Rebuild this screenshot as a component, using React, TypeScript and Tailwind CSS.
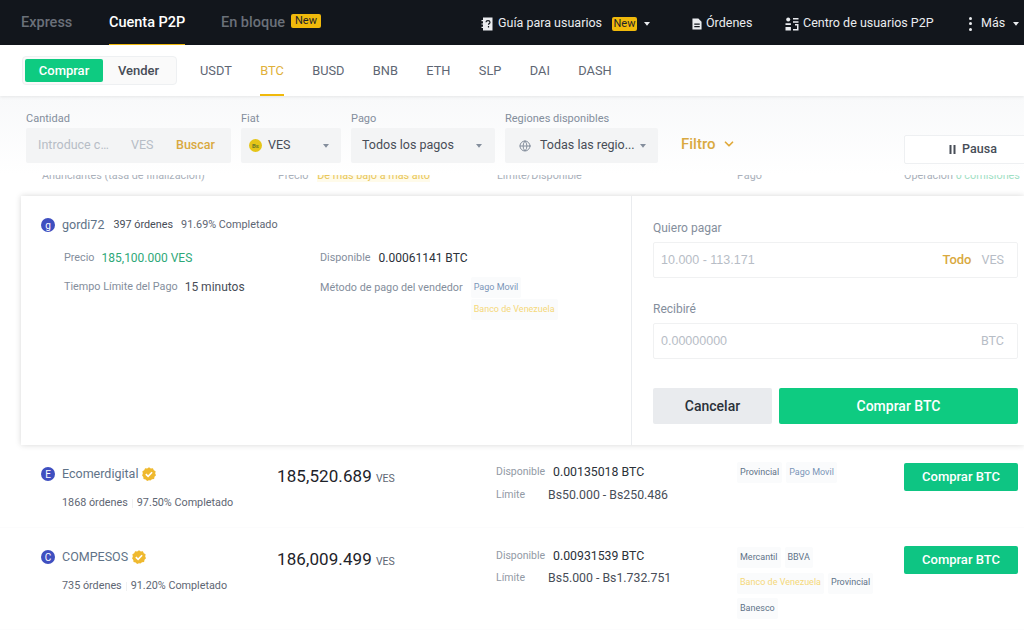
import React from 'react';
import { ChevronDown, Globe } from 'lucide-react';

const font = { fontFamily: 'Roboto, "Noto Sans", sans-serif' };

function Caret({ className = 'text-[#848e9c]' }: { className?: string }) {
  return (
    <svg width="8" height="6" viewBox="0 0 8 6" className={`shrink-0 ${className}`}>
      <path d="M1 1h6L4 4.8z" fill="currentColor" />
    </svg>
  );
}

function NewBadge({ className = '' }: { className?: string }) {
  return (
    <span className={`flex h-[14px] shrink-0 items-center justify-center rounded-[2px] bg-[#f0b90b] text-[11px] leading-none text-[#1e2329] ${className}`}>
      New
    </span>
  );
}

function GuideIcon() {
  return (
    <svg width="12" height="14" viewBox="0 0 12 14" className="shrink-0">
      <path d="M2 0.5h9.5v13H2V11H0.5V9.8H2V7.6H0.5V6.4H2V4.2H0.5V3H2z" fill="#eaecef" />
      <path d="M5 5.2c0-2.2 4-2.2 4 0 0 1.4-1.5 1.3-1.5 2.6M7.5 9v1.4" stroke="#12161c" strokeWidth="1.2" fill="none" />
    </svg>
  );
}

function OrdersIcon() {
  return (
    <svg width="10" height="12" viewBox="0 0 11 13" className="shrink-0">
      <path d="M0.5 0.5h6.5l3.5 3.5v8.5h-10z" fill="#eaecef" />
      <path d="M2.5 6h6v1.2h-6zM2.5 8.8h6V10h-6z" fill="#12161c" />
    </svg>
  );
}

function UsersIcon() {
  return (
    <svg width="14" height="14" viewBox="0 0 14 14" fill="#eaecef" className="shrink-0">
      <circle cx="3.2" cy="2.6" r="2" />
      <path d="M0.5 6.2h5.4V8H0.5zM0.5 10h5.4v3.5H0.5z" />
      <path d="M8 1h5.5v1.6H8zM8 4.2h5.5v1.6H8zM10 7h3.5v6.5H8V12h4V8.6h-2z" />
    </svg>
  );
}

function VerifiedBadge() {
  return (
    <svg width="14" height="14" viewBox="0 0 14 14" className="shrink-0">
      <path
        d="M7 0.3l1.8 1.1 2.1-.1.9 1.9 1.8 1.1-.4 2.1.8 1.9-1.5 1.5-.4 2.1-2.1.3L8.4 13.6 7 13.2l-1.9.7-1.5-1.5-2.1-.3-.2-2.1L.1 8.4.8 6.4.4 4.3 2.2 3.2l.9-1.9 2.1.1z"
        fill="#efb92f"
      />
      <path d="M3.8 7.1l2.3 2.3 4-4.2" stroke="#fff" strokeWidth="1.6" fill="none" />
    </svg>
  );
}

function Avatar({ letter }: { letter: string }) {
  return (
    <span className="flex h-[14px] w-[14px] shrink-0 items-center justify-center rounded-full bg-[#3f4fc0] text-[10px] text-white">
      {letter}
    </span>
  );
}

function Tag({ children, color = 'text-[#5f7388]' }: { children: React.ReactNode; color?: string }) {
  return <span className={`flex h-[21px] items-center whitespace-nowrap rounded-[2px] bg-[#fafbfc] px-[3px] text-[9px] ${color}`}>{children}</span>;
}

function FilterField({ label, width, children }: { label: string; width: string; children: React.ReactNode }) {
  return (
    <div className={`flex shrink-0 flex-col ${width}`}>
      <span className="h-[17px] text-[11px] leading-[16px] text-[#848e9c]">{label}</span>
      <div className="flex h-[35px] items-center whitespace-nowrap rounded-[2px] bg-[#f3f4f5] text-[12.5px] text-[#474d57]">{children}</div>
    </div>
  );
}

type Offer = {
  name: string;
  letter: string;
  orders: string;
  rate: string;
  price: string;
  available: string;
  limit: string;
  tagRows: { label: string; color?: string }[][];
  height: string;
  tagTop: string;
  infoTop: string;
  infoGap: string;
};

const offers: Offer[] = [
  {
    name: 'Ecomerdigital',
    letter: 'E',
    orders: '1868 órdenes',
    rate: '97.50% Completado',
    price: '185,520.689',
    available: '0.00135018 BTC',
    limit: 'Bs50.000 - Bs250.486',
    tagRows: [[{ label: 'Provincial' }, { label: 'Pago Movil', color: 'text-[#7b96b8]' }]],
    height: 'h-[83px]',
    tagTop: 'pt-[17px]',
    infoTop: 'pt-[18px]',
    infoGap: 'mt-[5px]',
  },
  {
    name: 'COMPESOS',
    letter: 'C',
    orders: '735 órdenes',
    rate: '91.20% Completado',
    price: '186,009.499',
    available: '0.00931539 BTC',
    limit: 'Bs5.000 - Bs1.732.751',
    tagRows: [
      [{ label: 'Mercantil' }, { label: 'BBVA' }],
      [{ label: 'Banco de Venezuela', color: 'text-[#f5d87a]' }, { label: 'Provincial' }],
      [{ label: 'Banesco' }],
    ],
    height: 'h-[102px]',
    tagTop: 'pt-[19px]',
    infoTop: 'pt-[19px]',
    infoGap: 'mt-[4px]',
  },
];

function OfferRow({ offer }: { offer: Offer }) {
  return (
    <div className={`flex border-b border-[#fcfcfd] pl-[41px] ${offer.height}`}>
      <div className="w-[236px] shrink-0 pt-[21px]">
        <div className="flex h-[16px] items-center">
          <Avatar letter={offer.letter} />
          <span className="ml-[7px] text-[12.5px] text-[#5f7388]">{offer.name}</span>
          <span className="ml-[4px]"><VerifiedBadge /></span>
        </div>
        <div className="mt-[13px] flex items-center pl-[21px] text-[10.8px] text-[#5e6673]">
          <span>{offer.orders}</span>
          <span className="mx-[4px] h-[9px] w-px bg-[#f0f1f2]" />
          <span>{offer.rate}</span>
        </div>
      </div>
      <div className="w-[219px] shrink-0 pt-[20px]">
        <span className="text-[17px] leading-[22px] tracking-[0.1px] text-[#1e2329]">{offer.price}</span>
        <span className="ml-[4px] text-[10.5px] text-[#5e6673]">VES</span>
      </div>
      <div className={`w-[241px] shrink-0 ${offer.infoTop}`}>
        <div className="flex h-[18px] items-center">
          <span className="w-[57px] text-[10.5px] text-[#929aa5]">Disponible</span>
          <span className="text-[12.3px] text-[#2b3139]">{offer.available}</span>
        </div>
        <div className={`${offer.infoGap} flex h-[18px] items-center`}>
          <span className="w-[52px] text-[10.5px] text-[#929aa5]">Límite</span>
          <span className="text-[12.3px] text-[#474d57]">{offer.limit}</span>
        </div>
      </div>
      <div className={`w-[167px] shrink-0 ${offer.tagTop}`}>
        <div className="flex flex-col gap-[4.5px]">
          {offer.tagRows.map((row, i) => (
            <div key={i} className="flex gap-[4px]">
              {row.map(t => (
                <Tag key={t.label} color={t.color}>{t.label}</Tag>
              ))}
            </div>
          ))}
        </div>
      </div>
      <div className="pt-[18px]">
        <button className="flex h-[28px] w-[114px] items-center justify-center rounded-[2px] bg-[#0ec583] text-[13px] font-medium text-white">Comprar BTC</button>
      </div>
    </div>
  );
}

export default function App() {
  return (
    <div className="h-[630px] w-[1024px] overflow-hidden bg-white" style={font}>
      {/* top nav */}
      <div className="flex h-[45px] items-center whitespace-nowrap bg-[#12161c] pl-[21px]">
        <div className="flex h-full w-[460px] shrink-0 items-center text-[14.5px] font-medium">
          <span className="w-[88px] text-[#6a7079]">Express</span>
          <div className="relative flex h-full w-[112px] items-center">
            <span className="text-white">Cuenta P2P</span>
            <span className="absolute bottom-0 left-0 h-[1px] w-[76px] bg-[#f0b90b]" />
          </div>
          <span className="text-[#6a7079]">En bloque</span>
          <NewBadge className="mb-[4px] ml-[6px] w-[30px] font-normal" />
        </div>
        <div className="flex items-center pt-[2px] text-[12.5px] text-[#eaecef]">
          <GuideIcon />
          <span className="ml-[5px] w-[114px]">Guía para usuarios</span>
          <NewBadge className="w-[25px]" />
          <Caret className="ml-[6px] text-[#eaecef]" />
          <span className="ml-[41px]"><OrdersIcon /></span>
          <span className="ml-[4px] w-[47px]">Órdenes</span>
          <span className="ml-[32px]"><UsersIcon /></span>
          <span className="ml-[4px] w-[131px]">Centro de usuarios P2P</span>
          <span className="ml-[35px] flex h-[14px] w-[3px] flex-col justify-between">
            <i className="h-[3px] w-[3px] rounded-full bg-[#eaecef]" />
            <i className="h-[3px] w-[3px] rounded-full bg-[#eaecef]" />
            <i className="h-[3px] w-[3px] rounded-full bg-[#eaecef]" />
          </span>
          <span className="ml-[9px]">Más</span>
          <Caret className="ml-[7px] text-[#eaecef]" />
        </div>
      </div>

      {/* side + coin tabs */}
      <div className="relative z-10 flex h-[51px] items-center bg-white pl-[22px] shadow-[0_1px_3px_rgba(0,0,0,0.08)]">
        <div className="flex h-[29px] w-[155px] items-center rounded-[4px] border border-[#eef0f2] bg-[#fafafa] p-[2px]">
          <button className="flex h-[23px] w-[78px] items-center justify-center rounded-[2px] bg-[#0ecb81] text-[13px] font-medium text-white">Comprar</button>
          <span className="flex-1 text-center text-[13px] font-medium text-[#474d57]">Vender</span>
        </div>
        <div className="ml-[23px] flex h-full items-center gap-[28.4px] text-[12.8px] text-[#5e6673]">
          <span>USDT</span>
          <span className="relative flex h-full items-center text-[#e0b13a]">
            BTC
            <i className="absolute bottom-0 left-0 h-[2px] w-full bg-[#f0b90b]" />
          </span>
          <span>BUSD</span>
          <span>BNB</span>
          <span>ETH</span>
          <span>SLP</span>
          <span>DAI</span>
          <span>DASH</span>
        </div>
      </div>

      {/* filters */}
      <div className="flex h-[79px] bg-gradient-to-b from-[#f8f9fa] to-white pl-[26px] pt-[15px]">
        <FilterField label="Cantidad" width="w-[205px]">
          <span className="ml-[12px] w-[81px] truncate text-[#b7bdc6]">Introduce c…</span>
          <span className="ml-[12px] w-[33px] text-[#b7bdc6]">VES</span>
          <span className="ml-[12px] font-medium text-[#d9a93f]">Buscar</span>
        </FilterField>
        <div className="w-[10px] shrink-0" />
        <FilterField label="Fiat" width="w-[100px]">
          <span className="ml-[8px] flex h-[13px] w-[13px] items-center justify-center rounded-full bg-[#e5c518] text-[6px] font-bold text-[#6b7a2a]">Bs</span>
          <span className="ml-[6px]">VES</span>
          <Caret className="ml-auto mr-[11px] text-[#848e9c]" />
        </FilterField>
        <div className="w-[10px] shrink-0" />
        <FilterField label="Pago" width="w-[144px]">
          <span className="ml-[11px]">Todos los pagos</span>
          <Caret className="ml-auto mr-[12px] text-[#848e9c]" />
        </FilterField>
        <div className="w-[10px] shrink-0" />
        <FilterField label="Regiones disponibles" width="w-[153px]">
          <Globe size={12} className="ml-[14px] shrink-0 text-[#848e9c]" />
          <span className="ml-[9px]">Todas las regio...</span>
          <Caret className="ml-auto mr-[11px] text-[#848e9c]" />
        </FilterField>
        <div className="ml-[23px] flex h-[57px] w-[223px] shrink-0 items-end pb-[15px]">
          <span className="text-[15px] font-medium leading-[18px] text-[#d9a93f]">Filtro</span>
          <ChevronDown size={14} strokeWidth={3} className="mb-[2px] ml-[6px] text-[#e0a93a]" />
        </div>
        <div className="mt-[24px] flex h-[29px] w-[138px] shrink-0 items-center justify-center gap-[6px] rounded-[2px] border border-[#eef0f2] bg-white text-[12.5px] font-medium text-[#474d57]">
          <svg width="7" height="9" viewBox="0 0 7 9" fill="#474d57"><path d="M0.5 0h2v9h-2zM4.5 0h2v9h-2z" /></svg>
          <span>Pausa</span>
        </div>
      </div>

      {/* table header, its top half sits behind the filters */}
      <div className="flex h-[11px] overflow-hidden whitespace-nowrap pl-[42px] text-[10.8px] leading-[14px] text-[#a9b0ba]">
        <span className="-mt-[6px] w-[236px] shrink-0">Anunciantes (tasa de finalización)</span>
        <span className="-mt-[6px] w-[219px] shrink-0">
          Precio <span className="ml-[6px] bg-[#fffbea] text-[#e8c65a]">De más bajo a más alto</span>
        </span>
        <span className="-mt-[6px] w-[240px] shrink-0">Límite/Disponible</span>
        <span className="-mt-[6px] w-[167px] shrink-0">Pago</span>
        <span className="-mt-[6px]">Operación <span className="text-[#9fe0c4]">0 comisiones</span></span>
      </div>

      {/* expanded offer */}
      <div className="relative z-10 ml-[21px] mt-[10px] flex h-[249px] bg-white shadow-[0_0_6px_rgba(0,0,0,0.16)]">
        <div className="w-[611px] shrink-0 border-r border-[#eaecef] pl-[20px] pt-[20px]">
          <div className="flex h-[18px] items-center">
            <Avatar letter="g" />
            <span className="ml-[7px] text-[12.5px] text-[#5f7388]">gordi72</span>
            <span className="ml-[9px] text-[10.8px] text-[#474d57]">397 órdenes</span>
            <span className="ml-[8px] text-[10.8px] text-[#5e6673]">91.69% Completado</span>
          </div>
          <div className="mt-[15px] flex pl-[23px]">
            <div className="w-[256px] shrink-0">
              <div className="flex h-[18px] items-center">
                <span className="text-[10.8px] text-[#848e9c]">Precio</span>
                <span className="ml-[7px] text-[12px] text-[#2ea878]">185,100.000 VES</span>
              </div>
              <div className="mt-[11px] flex h-[18px] items-center">
                <span className="text-[10.8px] text-[#848e9c]">Tiempo Límite del Pago</span>
                <span className="ml-[7px] text-[12px] text-[#474d57]">15 minutos</span>
              </div>
            </div>
            <div>
              <div className="flex h-[18px] items-center">
                <span className="text-[10.8px] text-[#848e9c]">Disponible</span>
                <span className="ml-[8px] text-[12px] text-[#2b3139]">0.00061141 BTC</span>
              </div>
              <div className="mt-[10px] flex">
                <span className="mr-[8px] pt-[3px] text-[10.8px] text-[#848e9c]">Método de pago del vendedor</span>
                <div className="flex flex-col items-start gap-[1px]">
                  <Tag color="text-[#7b96b8]">Pago Movil</Tag>
                  <Tag color="text-[#f5d87a]">Banco de Venezuela</Tag>
                </div>
              </div>
            </div>
          </div>
        </div>
        <div className="flex-1 pl-[21px] pr-[6px] pt-[24px]">
          <span className="block h-[22px] text-[12px] leading-[16px] text-[#848e9c]">Quiero pagar</span>
          <div className="flex h-[36px] items-center rounded-[2px] border border-[#f0f1f2] px-[7px] text-[12.5px] text-[#b7bdc6]">
            <span className="font-['Liberation_Sans']">10.000 - 113.171</span>
            <span className="ml-auto text-[13px] font-medium text-[#d9a93f]">Todo</span>
            <span className="ml-[10px] mr-[6px] text-[#b7bdc6]">VES</span>
          </div>
          <span className="mt-[23px] block h-[22px] text-[12px] leading-[16px] text-[#848e9c]">Recibiré</span>
          <div className="flex h-[36px] items-center rounded-[2px] border border-[#f0f1f2] px-[7px] text-[12.5px] text-[#b7bdc6]">
            <span className="font-['Liberation_Sans']">0.00000000</span>
            <span className="ml-auto mr-[6px]">BTC</span>
          </div>
          <div className="mt-[29px] flex gap-[7px]">
            <button className="h-[36px] w-[119px] rounded-[2px] bg-[#e9ebee] text-[14px] font-medium text-[#2b3139]">Cancelar</button>
            <button className="h-[36px] flex-1 rounded-[2px] bg-[#0ecb81] text-[14px] font-medium text-white">Comprar BTC</button>
          </div>
        </div>
      </div>

      {offers.map(o => (
        <OfferRow key={o.name} offer={o} />
      ))}
    </div>
  );
}
